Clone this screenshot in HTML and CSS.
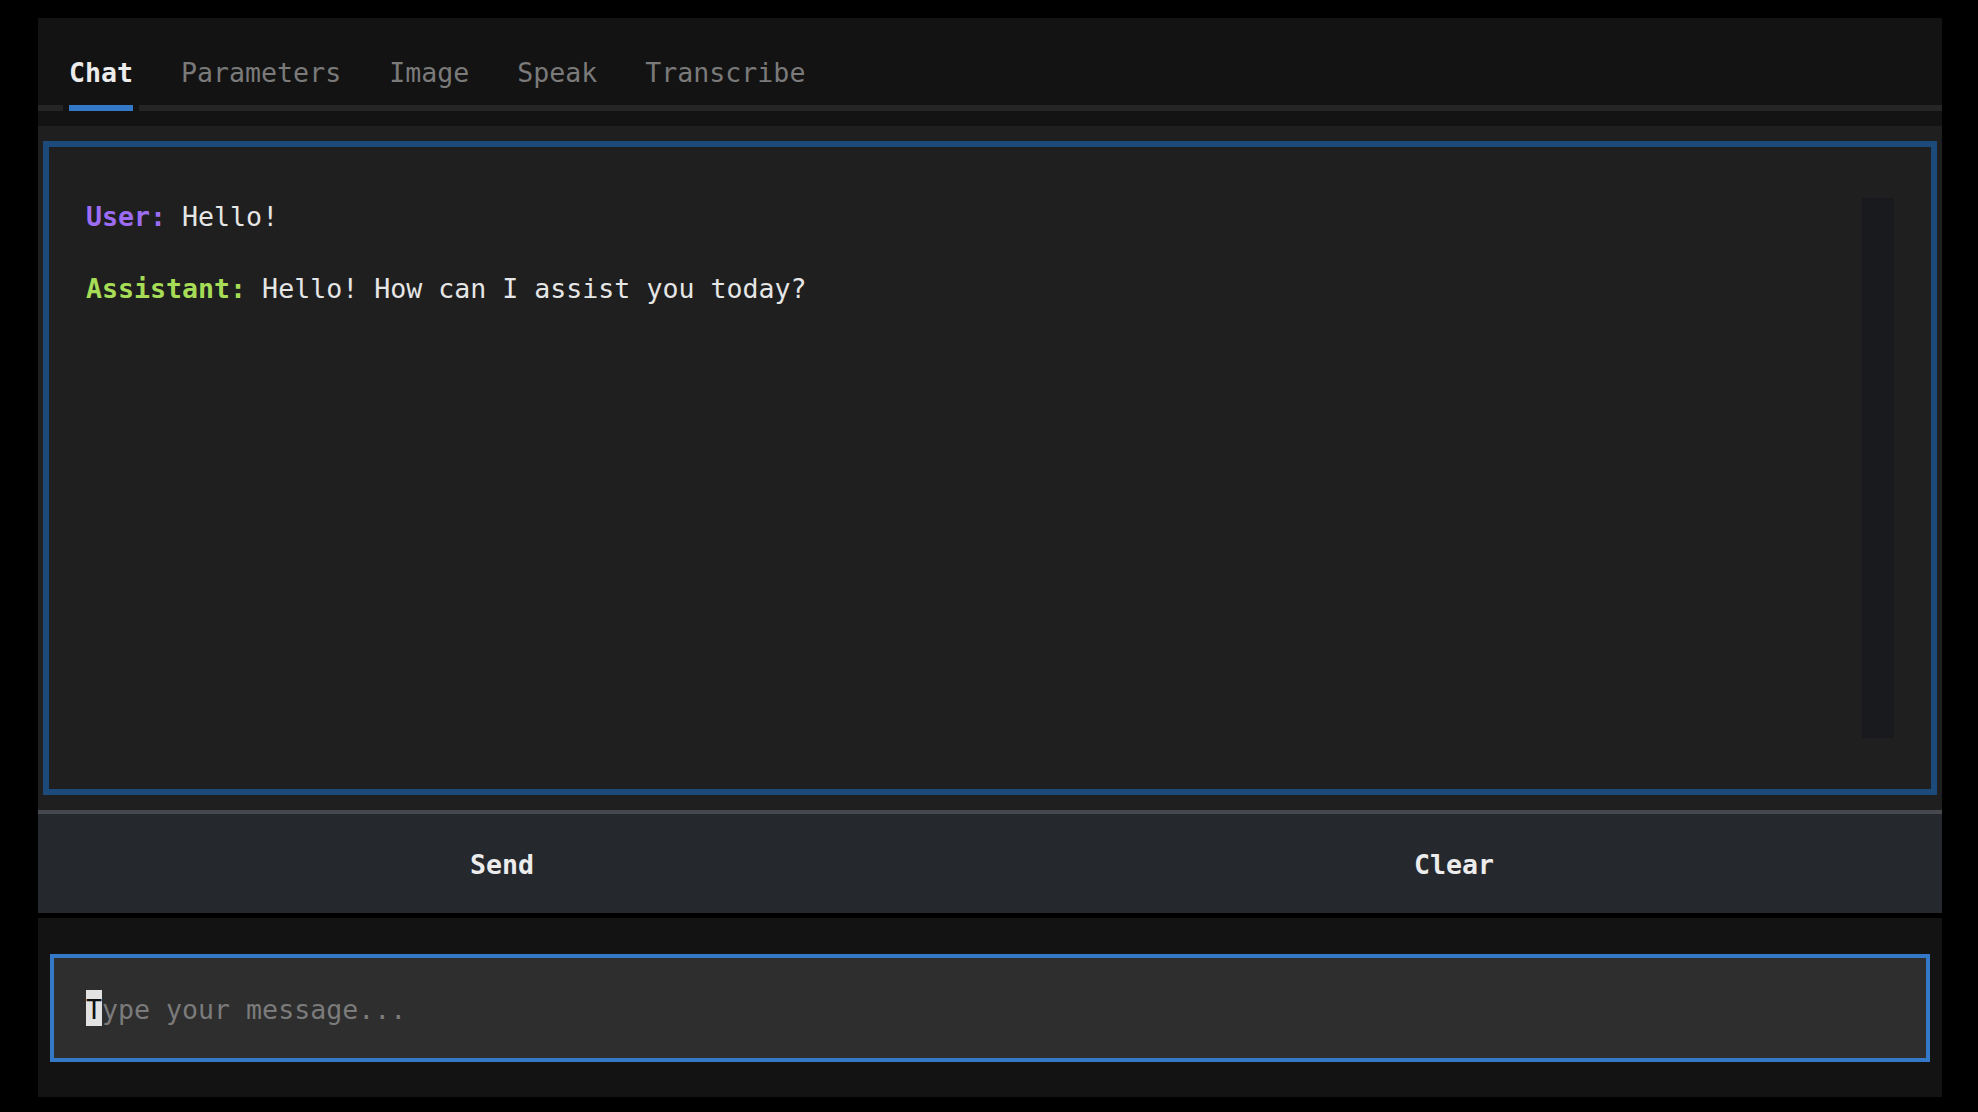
FILE: index.html
```html
<!DOCTYPE html>
<html lang="en">
<head>
<meta charset="utf-8">
<title>Chat</title>
<link rel="stylesheet" href="styles.css">
</head>
<body>
<div class="app">
  <div class="tabs-area">
    <div class="tablist">
      <div class="tab active">Chat</div>
      <div class="tab">Parameters</div>
      <div class="tab">Image</div>
      <div class="tab">Speak</div>
      <div class="tab">Transcribe</div>
    </div>
  </div>
  <div class="chat-area">
    <div class="chat-box">
      <div class="messages">
        <div class="msg"><span class="who user">User:</span> Hello!</div>
        <div class="msg"><span class="who assistant">Assistant:</span> Hello! How can I assist you today?</div>
      </div>
      <div class="track"></div>
    </div>
  </div>
  <div class="btn-row">
    <div class="btn">Send</div>
    <div class="btn">Clear</div>
  </div>
  <div class="input-area">
    <div class="input"><span class="cursor">T</span><span class="placeholder">ype your message...</span></div>
  </div>
</div>
</body>
</html>
```

FILE: styles.css
```css
html, body {
  margin: 0;
  padding: 0;
  background: #000;
}

body {
  font-family: "DejaVu Sans Mono", "Liberation Mono", monospace;
  font-size: 26.6px;
  line-height: 38px;
  color: #e6e6e6;
}

.app {
  margin: 18px 36px 15px 38px;
  display: flex;
  flex-direction: column;
}

.tabs-area {
  background: #131313;
  padding: 36px 0 15px 0;
}

.tablist {
  display: flex;
  gap: 36px;
  padding-left: 25px;
  border-bottom: 6px solid #252525;
}

.tab {
  position: relative;
  margin: 0 6px;
  padding-bottom: 13px;
  color: #7a7a7a;
}

.tab.active {
  color: #ececec;
  font-weight: bold;
}

.tab.active::after {
  content: "";
  position: absolute;
  left: -6px;
  right: -6px;
  bottom: -6px;
  height: 6px;
  box-sizing: border-box;
  background: #3478c8;
  border-left: 6px solid #131313;
  border-right: 6px solid #131313;
}

.chat-area {
  background: #1f1f1f;
  padding: 15px 5px;
}

.chat-box {
  border: 6px solid #1c4a7a;
  padding: 51px 37px;
  box-sizing: content-box;
  display: flex;
  height: 540px;
}

.messages {
  flex: 1;
}

.msg {
  margin-bottom: 34px;
  white-space: pre;
}

.who {
  font-weight: bold;
}

.who.user {
  color: #9c6cf3;
}

.who.assistant {
  color: #a6dc56;
}

.track {
  width: 32px;
  background: #181a1d;
}

.btn-row {
  display: flex;
  border-top: 4px solid #45484c;
  background: #25282d;
  height: 99px;
}

.btn {
  flex: 1;
  display: flex;
  align-items: center;
  justify-content: center;
  padding: 3px 24px 0 0;
  font-weight: bold;
  color: #ececec;
}

.input-area {
  margin-top: 5px;
  background: #131313;
  padding: 36px 12px 35px 12px;
}

.input {
  border: 4px solid #3478c8;
  background: #2e2e2e;
  height: 100px;
  box-sizing: content-box;
  padding-left: 32px;
  display: flex;
  align-items: center;
  line-height: 36px;
}

.cursor {
  display: inline-block;
  height: 36px;
  line-height: 40px;
  background: #e2e2e2;
  color: #111;
}

.placeholder {
  color: #7b7b7b;
  white-space: pre;
  line-height: 40px;
  height: 36px;
}
```
